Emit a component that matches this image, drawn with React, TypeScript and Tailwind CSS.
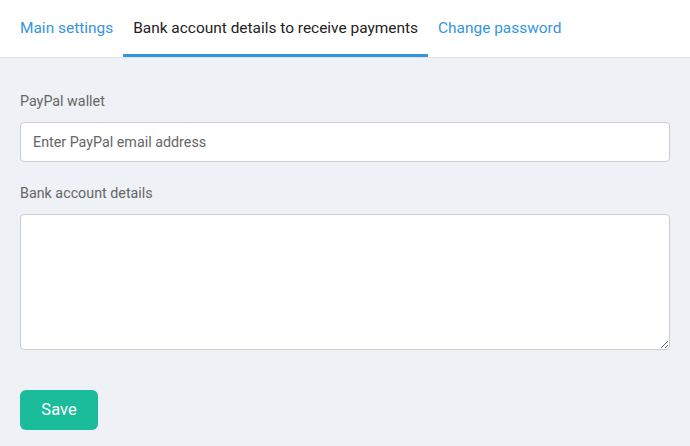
import { useState } from 'react'

const tabs = ['Main settings', 'Bank account details to receive payments', 'Change password']

export default function App() {
  const [active, setActive] = useState(1)

  return (
    <div className="min-h-[446px] w-[690px] bg-[#eef1f5] font-['Roboto',sans-serif]">
      <nav className="flex border-b border-[#dfe3e8] bg-white pl-[10px]">
        {tabs.map((tab, i) => (
          <button
            key={tab}
            onClick={() => setActive(i)}
            className={`flex h-[57px] items-center border-b-[3px] px-[10px] pt-[3px] text-[15.45px] ${
              i === active
                ? 'border-[#3595dd] text-[#222]'
                : 'border-transparent text-[#3595dd]'
            }`}
          >
            {tab}
          </button>
        ))}
      </nav>

      <form className="flex flex-col px-5 pt-[33px]">
        <label className="text-[14.3px] leading-5 text-[#666]">PayPal wallet</label>
        <input
          className="mt-[11px] h-10 rounded-[4px] border border-[#ccc] bg-white px-3 text-[14.3px] text-[#333] placeholder:text-[#666] focus:outline-none"
          placeholder="Enter PayPal email address"
        />

        <label className="mt-[21px] text-[14.3px] leading-5 text-[#666]">Bank account details</label>
        <textarea className="mt-[11px] h-[136px] rounded-[4px] border border-[#ccc] bg-white px-3 py-2 text-[14px] focus:outline-none" />

        <div className="mt-[40px]">
          <button
            type="button"
            className="h-10 w-[78px] rounded-[6px] bg-[#1abc9c] text-[16.5px] text-white"
          >
            Save
          </button>
        </div>
      </form>
    </div>
  )
}
